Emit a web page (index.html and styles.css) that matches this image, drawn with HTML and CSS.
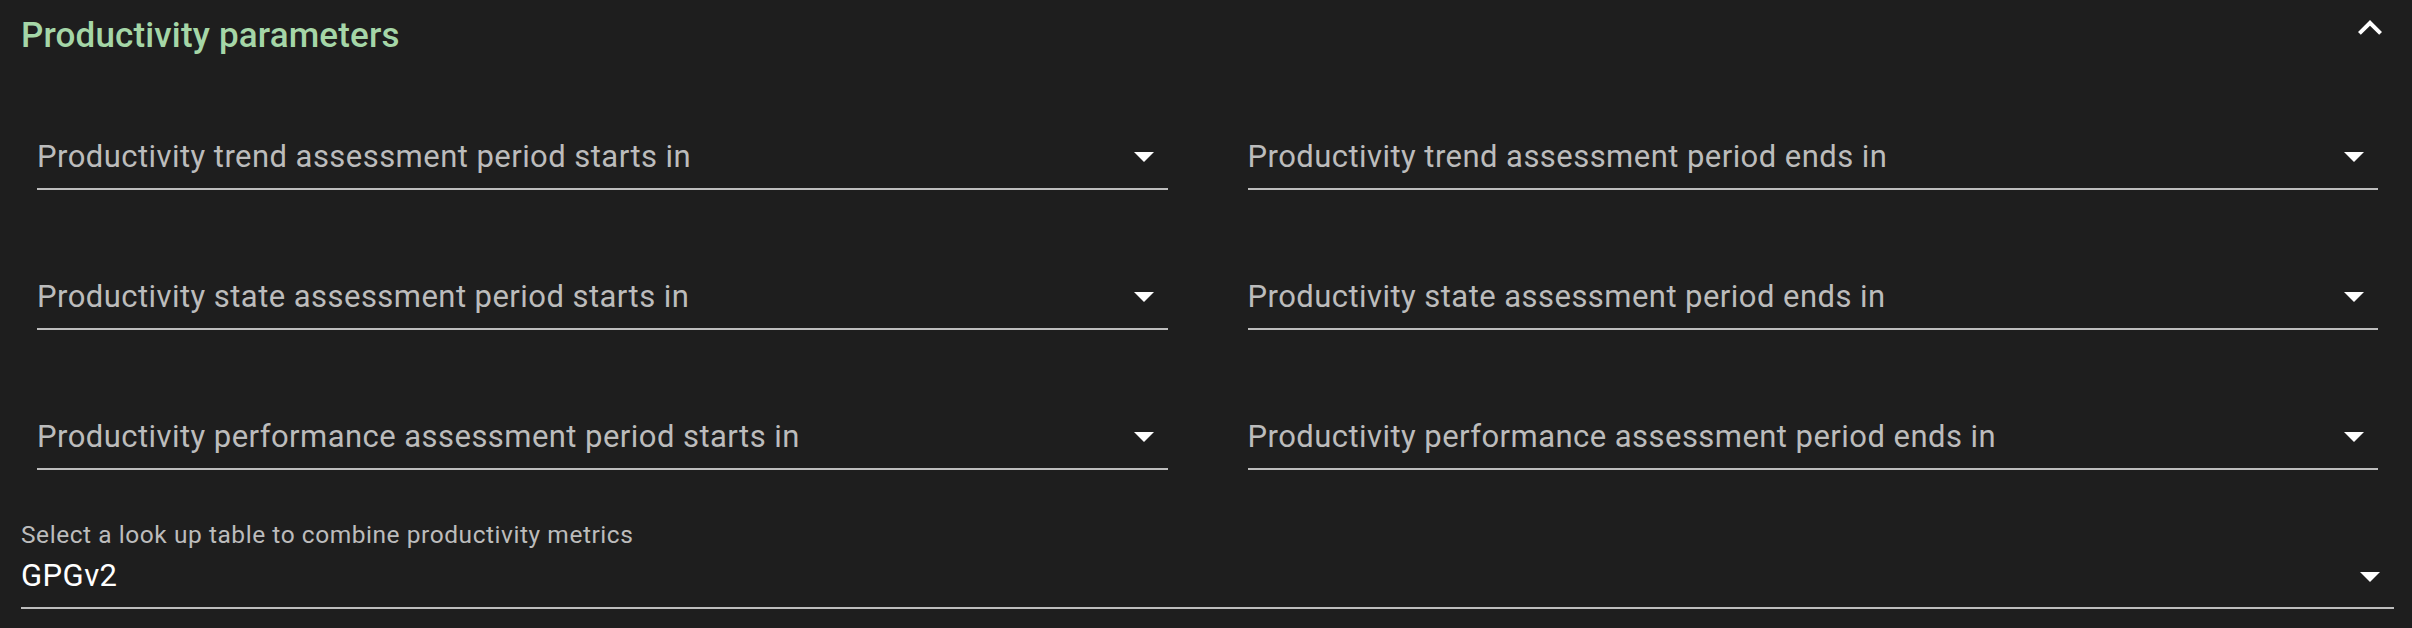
FILE: index.html
```html
<!DOCTYPE html>
<html lang="en">
<head>
<meta charset="utf-8">
<title>Productivity parameters</title>
<link rel="stylesheet" href="styles.css">
</head>
<body>
<section class="panel">
  <header class="panel-header">
    <h2 class="panel-title">Productivity parameters</h2>
    <button class="icon-btn" aria-label="Collapse">
      <svg viewBox="0 0 24 24" width="48" height="48"><path d="M12 8l-6 6 1.41 1.41L12 10.83l4.59 4.58L18 14z"/></svg>
    </button>
  </header>

  <div class="fields">
    <div class="field"><span class="field-text">Productivity trend assessment period starts in</span><svg class="arrow" viewBox="0 0 24 24" width="48" height="48"><path d="M7 10l5 5 5-5z"/></svg></div>
    <div class="field"><span class="field-text">Productivity trend assessment period ends in</span><svg class="arrow" viewBox="0 0 24 24" width="48" height="48"><path d="M7 10l5 5 5-5z"/></svg></div>
    <div class="field"><span class="field-text">Productivity state assessment period starts in</span><svg class="arrow" viewBox="0 0 24 24" width="48" height="48"><path d="M7 10l5 5 5-5z"/></svg></div>
    <div class="field"><span class="field-text">Productivity state assessment period ends in</span><svg class="arrow" viewBox="0 0 24 24" width="48" height="48"><path d="M7 10l5 5 5-5z"/></svg></div>
    <div class="field"><span class="field-text">Productivity performance assessment period starts in</span><svg class="arrow" viewBox="0 0 24 24" width="48" height="48"><path d="M7 10l5 5 5-5z"/></svg></div>
    <div class="field"><span class="field-text">Productivity performance assessment period ends in</span><svg class="arrow" viewBox="0 0 24 24" width="48" height="48"><path d="M7 10l5 5 5-5z"/></svg></div>
  </div>

  <div class="lut">
    <label class="lut-label">Select a look up table to combine productivity metrics</label>
    <div class="field lut-field"><span class="field-value">GPGv2</span><svg class="arrow" viewBox="0 0 24 24" width="48" height="48"><path d="M7 10l5 5 5-5z"/></svg></div>
  </div>
</section>
</body>
</html>
```

FILE: styles.css
```css
html, body {
  margin: 0;
  padding: 0;
  background: #1e1e1e;
  font-family: Roboto, "Noto Sans", sans-serif;
}

.panel {
  box-sizing: border-box;
  padding: 4px 18px 0 21px;
  height: 628px;
  overflow: hidden;
}

.panel-header {
  display: flex;
  justify-content: space-between;
  align-items: flex-start;
  height: 48px;
}

.panel-title {
  margin: 11px 0 0 0;
  font-size: 35px;
  line-height: 42px;
  font-weight: 500;
  letter-spacing: 0.15px;
  color: #a5d6a7;
}

.icon-btn {
  width: 48px;
  height: 48px;
  padding: 0;
  border: 0;
  background: transparent;
  display: flex;
}

.icon-btn svg,
.arrow {
  fill: #ffffff;
  flex: none;
}

.fields {
  margin-top: 72px;
  padding: 0 16px;
  display: grid;
  grid-template-columns: 1fr 1fr;
  column-gap: 80px;
  row-gap: 74px;
}

.field {
  display: flex;
  align-items: center;
  justify-content: space-between;
  height: 64px;
  border-bottom: 2px solid #bdbdbd;
}

.field-text {
  font-size: 31px;
  letter-spacing: 0.45px;
  color: #bcbcbc;
  white-space: nowrap;
}

.lut {
  margin-top: 56px;
}

.lut-label {
  display: block;
  font-size: 24.5px;
  line-height: 18px;
  letter-spacing: 0.55px;
  color: #bcbcbc;
}

.lut-field {
  height: 63px;
}

.field-value {
  font-size: 31px;
  letter-spacing: 0.45px;
  color: #ffffff;
}
```
